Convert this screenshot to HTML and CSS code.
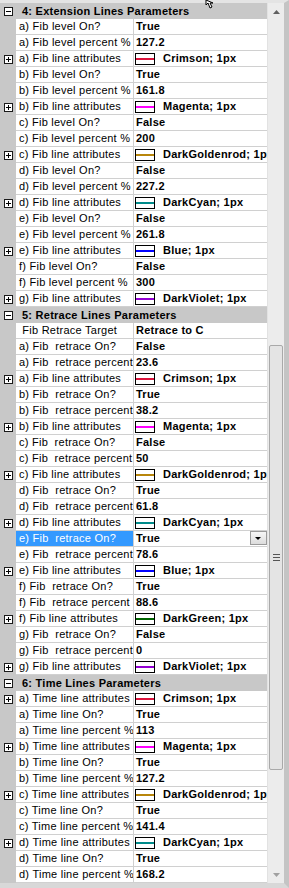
FILE: index.html
```html
<html><head>
<link rel="stylesheet" href="styles.css">
</head>
<body>
  <div class="grid">
    <div class="rows">

      <div class="cat"><span class="gut"><i class="box minus"></i></span><span class="cat-name">4: Extension Lines Parameters</span></div>
      <div class="row"><span class="gut"></span><span class="name">a) Fib level On?</span><span class="val">True</span></div>
      <div class="row"><span class="gut"></span><span class="name">a) Fib level percent %</span><span class="val">127.2</span></div>
      <div class="row"><span class="gut"><i class="box plus"></i></span><span class="name">a) Fib line attributes</span><span class="val"><i class="sw crimson"></i>Crimson; 1px</span></div>
      <div class="row"><span class="gut"></span><span class="name">b) Fib level On?</span><span class="val">True</span></div>
      <div class="row"><span class="gut"></span><span class="name">b) Fib level percent %</span><span class="val">161.8</span></div>
      <div class="row"><span class="gut"><i class="box plus"></i></span><span class="name">b) Fib line attributes</span><span class="val"><i class="sw magenta"></i>Magenta; 1px</span></div>
      <div class="row"><span class="gut"></span><span class="name">c) Fib level On?</span><span class="val">False</span></div>
      <div class="row"><span class="gut"></span><span class="name">c) Fib level percent %</span><span class="val">200</span></div>
      <div class="row"><span class="gut"><i class="box plus"></i></span><span class="name">c) Fib line attributes</span><span class="val"><i class="sw goldenrod"></i>DarkGoldenrod; 1px</span></div>
      <div class="row"><span class="gut"></span><span class="name">d) Fib level On?</span><span class="val">False</span></div>
      <div class="row"><span class="gut"></span><span class="name">d) Fib level percent %</span><span class="val">227.2</span></div>
      <div class="row"><span class="gut"><i class="box plus"></i></span><span class="name">d) Fib line attributes</span><span class="val"><i class="sw cyan"></i>DarkCyan; 1px</span></div>
      <div class="row"><span class="gut"></span><span class="name">e) Fib level On?</span><span class="val">False</span></div>
      <div class="row"><span class="gut"></span><span class="name">e) Fib level percent %</span><span class="val">261.8</span></div>
      <div class="row"><span class="gut"><i class="box plus"></i></span><span class="name">e) Fib line attributes</span><span class="val"><i class="sw blue"></i>Blue; 1px</span></div>
      <div class="row"><span class="gut"></span><span class="name">f) Fib level On?</span><span class="val">False</span></div>
      <div class="row"><span class="gut"></span><span class="name">f) Fib level percent %</span><span class="val">300</span></div>
      <div class="row"><span class="gut"><i class="box plus"></i></span><span class="name">g) Fib line attributes</span><span class="val"><i class="sw violet"></i>DarkViolet; 1px</span></div>

      <div class="cat"><span class="gut"><i class="box minus"></i></span><span class="cat-name">5: Retrace Lines Parameters</span></div>
      <div class="row"><span class="gut"></span><span class="name"> Fib Retrace Target</span><span class="val">Retrace to C</span></div>
      <div class="row"><span class="gut"></span><span class="name">a) Fib  retrace On?</span><span class="val">False</span></div>
      <div class="row"><span class="gut"></span><span class="name">a) Fib  retrace percent %</span><span class="val">23.6</span></div>
      <div class="row"><span class="gut"><i class="box plus"></i></span><span class="name">a) Fib line attributes</span><span class="val"><i class="sw crimson"></i>Crimson; 1px</span></div>
      <div class="row"><span class="gut"></span><span class="name">b) Fib  retrace On?</span><span class="val">True</span></div>
      <div class="row"><span class="gut"></span><span class="name">b) Fib  retrace percent %</span><span class="val">38.2</span></div>
      <div class="row"><span class="gut"><i class="box plus"></i></span><span class="name">b) Fib line attributes</span><span class="val"><i class="sw magenta"></i>Magenta; 1px</span></div>
      <div class="row"><span class="gut"></span><span class="name">c) Fib  retrace On?</span><span class="val">False</span></div>
      <div class="row"><span class="gut"></span><span class="name">c) Fib  retrace percent %</span><span class="val">50</span></div>
      <div class="row"><span class="gut"><i class="box plus"></i></span><span class="name">c) Fib line attributes</span><span class="val"><i class="sw goldenrod"></i>DarkGoldenrod; 1px</span></div>
      <div class="row"><span class="gut"></span><span class="name">d) Fib  retrace On?</span><span class="val">True</span></div>
      <div class="row"><span class="gut"></span><span class="name">d) Fib  retrace percent %</span><span class="val">61.8</span></div>
      <div class="row"><span class="gut"><i class="box plus"></i></span><span class="name">d) Fib line attributes</span><span class="val"><i class="sw cyan"></i>DarkCyan; 1px</span></div>
      <div class="row selected"><span class="gut"></span><span class="name">e) Fib  retrace On?</span><span class="val">True<b class="drop"></b></span></div>
      <div class="row"><span class="gut"></span><span class="name">e) Fib  retrace percent %</span><span class="val">78.6</span></div>
      <div class="row"><span class="gut"><i class="box plus"></i></span><span class="name">e) Fib line attributes</span><span class="val"><i class="sw blue"></i>Blue; 1px</span></div>
      <div class="row"><span class="gut"></span><span class="name">f) Fib  retrace On?</span><span class="val">True</span></div>
      <div class="row"><span class="gut"></span><span class="name">f) Fib  retrace percent %</span><span class="val">88.6</span></div>
      <div class="row"><span class="gut"><i class="box plus"></i></span><span class="name">f) Fib line attributes</span><span class="val"><i class="sw green"></i>DarkGreen; 1px</span></div>
      <div class="row"><span class="gut"></span><span class="name">g) Fib  retrace On?</span><span class="val">False</span></div>
      <div class="row"><span class="gut"></span><span class="name">g) Fib  retrace percent %</span><span class="val">0</span></div>
      <div class="row"><span class="gut"><i class="box plus"></i></span><span class="name">g) Fib line attributes</span><span class="val"><i class="sw violet"></i>DarkViolet; 1px</span></div>

      <div class="cat"><span class="gut"><i class="box minus"></i></span><span class="cat-name">6: Time Lines Parameters</span></div>
      <div class="row"><span class="gut"><i class="box plus"></i></span><span class="name">a) Time line attributes</span><span class="val"><i class="sw crimson"></i>Crimson; 1px</span></div>
      <div class="row"><span class="gut"></span><span class="name">a) Time line On?</span><span class="val">True</span></div>
      <div class="row"><span class="gut"></span><span class="name">a) Time line percent %</span><span class="val">113</span></div>
      <div class="row"><span class="gut"><i class="box plus"></i></span><span class="name">b) Time line attributes</span><span class="val"><i class="sw magenta"></i>Magenta; 1px</span></div>
      <div class="row"><span class="gut"></span><span class="name">b) Time line On?</span><span class="val">True</span></div>
      <div class="row"><span class="gut"></span><span class="name">b) Time line percent %</span><span class="val">127.2</span></div>
      <div class="row"><span class="gut"><i class="box plus"></i></span><span class="name">c) Time line attributes</span><span class="val"><i class="sw goldenrod"></i>DarkGoldenrod; 1px</span></div>
      <div class="row"><span class="gut"></span><span class="name">c) Time line On?</span><span class="val">True</span></div>
      <div class="row"><span class="gut"></span><span class="name">c) Time line percent %</span><span class="val">141.4</span></div>
      <div class="row"><span class="gut"><i class="box plus"></i></span><span class="name">d) Time line attributes</span><span class="val"><i class="sw cyan"></i>DarkCyan; 1px</span></div>
      <div class="row"><span class="gut"></span><span class="name">d) Time line On?</span><span class="val">True</span></div>
      <div class="row"><span class="gut"></span><span class="name">d) Time line percent %</span><span class="val">168.2</span></div>
    </div>

    <div class="scrollbar">
      <div class="sb-btn"><svg width="7" height="4" viewBox="0 0 7 4"><path d="M0 4 L3.5 0 L7 4 Z" fill="#606060"/></svg></div>
      <div class="track">
        <div class="thumb"><span class="grip"></span></div>
      </div>
      <div class="sb-btn"><svg width="7" height="4" viewBox="0 0 7 4"><path d="M0 0 L3.5 4 L7 0 Z" fill="#a0a0a0"/></svg></div>
    </div>
  </div>

  <svg class="cursor" width="12" height="9" viewBox="0 0 12 9">
    <path d="M1 0 L1 5 L3 3 L5 8 L7 7 L5 3 L8 3 Z" fill="#fff" stroke="#000" stroke-width="1"/>
  </svg>
</body></html>
```

FILE: styles.css
```css
body {
  margin: 0;
  background: #f0f0f0;
  font-family: "Liberation Sans", Tahoma, sans-serif;
  font-size: 11px;
  letter-spacing: 0.25px;
  color: #000;
  position: relative;
}

.grid {
  display: flex;
  width: 289px;
  height: 888px;
  box-sizing: border-box;
  border-top: 3px solid #e4e4e4;
  border-right: 5px solid #c4c4c4;
  border-bottom: 5px solid #d8d8d8;
  background: #c8c8c8;
}

.rows {
  width: 267px;
  display: flex;
  flex-direction: column;
}

.row, .cat {
  display: grid;
  grid-template-columns: 16px 118px 133px;
  height: 16px;
}

.cat {
  grid-template-columns: 16px 251px;
  background: #c8c8c8;
}

.gut {
  display: flex;
  align-items: center;
  padding-left: 4px;
  background: #c8c8c8;
}

.box {
  width: 9px;
  height: 9px;
  box-sizing: border-box;
  border: 1px solid #1a1a1a;
  background: #fff;
  position: relative;
}

.box:before {
  content: '';
  position: absolute;
  left: 1px;
  top: 3px;
  width: 5px;
  height: 1px;
  background: #000;
}

.box.plus:after {
  content: '';
  position: absolute;
  left: 3px;
  top: 1px;
  width: 1px;
  height: 5px;
  background: #000;
}

.cat-name {
  font-weight: bold;
  padding-left: 6px;
  line-height: 16px;
  white-space: nowrap;
  overflow: hidden;
}

.name, .val {
  background: #fff;
  border-bottom: 1px solid #d0d0d0;
  line-height: 15px;
  white-space: pre;
  overflow: hidden;
}

.name {
  padding-left: 3px;
  border-right: 1px solid #d0d0d0;
}

.val {
  padding-left: 2px;
  font-weight: bold;
  display: flex;
  align-items: center;
  position: relative;
}

.selected .name {
  background: #3399ff;
  color: #fff;
}

.sw {
  flex: none;
  width: 20px;
  height: 12px;
  box-sizing: border-box;
  border: 1px solid #000;
  background: #fff;
  margin: 0 8px 0 -1px;
  position: relative;
}

.sw:after {
  content: '';
  position: absolute;
  left: 0;
  right: 0;
  top: 4px;
  height: 2px;
  background: var(--line);
}

.crimson { --line: #dc143c; }
.magenta { --line: #ff00ff; }
.goldenrod { --line: #b8860b; }
.cyan { --line: #008b8b; }
.blue { --line: #0000ff; }
.violet { --line: #9400d3; }
.green { --line: #006400; }

.drop {
  position: absolute;
  right: 0;
  top: 0;
  width: 17px;
  height: 14px;
  box-sizing: border-box;
  border: 1px solid #9a9a9a;
  background: linear-gradient(#f6f6f6, #dcdcdc);
}

.drop:after {
  content: '';
  position: absolute;
  left: 4px;
  top: 5px;
  border-left: 3px solid transparent;
  border-right: 3px solid transparent;
  border-top: 3px solid #000;
}

.scrollbar {
  width: 17px;
  display: flex;
  flex-direction: column;
  background: #ececec;
  border-left: 1px solid #e2e2e2;
  box-sizing: border-box;
}

.sb-btn {
  height: 17px;
  display: flex;
  align-items: center;
  justify-content: center;
}

.track {
  flex: 1;
  display: flex;
  flex-direction: column;
}

.thumb {
  margin-top: 325px;
  height: 425px;
  margin-left: 1px;
  margin-right: 1px;
  box-sizing: border-box;
  border: 1px solid #a9a9a9;
  border-radius: 2px;
  background: #e4e4e4;
  display: flex;
  align-items: center;
  justify-content: center;
}

.grip {
  width: 7px;
  height: 5px;
  border-top: 1px solid #555;
  border-bottom: 1px solid #555;
  position: relative;
}

.grip:after {
  content: '';
  position: absolute;
  left: 0;
  right: 0;
  top: 2px;
  height: 1px;
  background: #555;
}

.cursor {
  position: absolute;
  left: 205px;
  top: 0;
}
```
